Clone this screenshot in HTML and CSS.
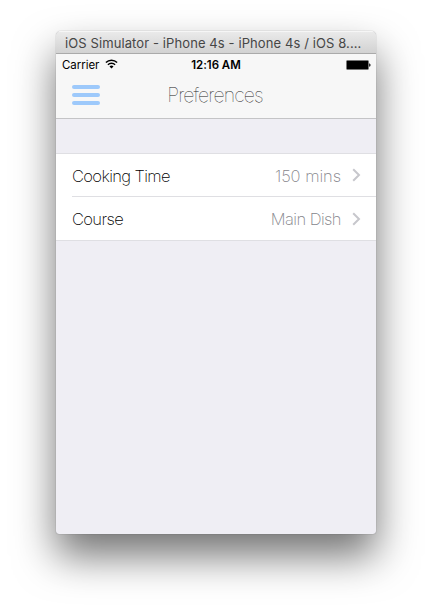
FILE: index.html
```html
<!DOCTYPE html>
<html lang="en">
<head>
<meta charset="utf-8">
<title>Preferences</title>
<link rel="stylesheet" href="styles.css">
</head>
<body>
<div class="window">
  <div class="titlebar"><span class="titlebar-text">iOS Simulator - iPhone 4s - iPhone 4s / iOS 8.…</span></div>
  <div class="screen">
    <header class="header">
      <div class="status">
        <div class="status-left">
          <span class="carrier">Carrier</span>
          <svg class="wifi" width="13" height="10" viewBox="0 0 13 10" fill="none" stroke="#000" stroke-width="1.5">
            <path d="M.9 3.5a8 8 0 0 1 11.2 0M2.9 5.7a5.1 5.1 0 0 1 7.2 0"/>
            <path d="M4.5 7.4a2.9 2.9 0 0 1 4 0L6.5 9.5z" fill="#000" stroke="none"/>
          </svg>
        </div>
        <span class="clock">12:16 AM</span>
        <svg class="battery" width="25" height="10" viewBox="0 0 25 10">
          <rect x=".5" y=".5" width="22" height="9" rx="1" fill="#000" stroke="#777"/>
          <path d="M23.2 3.2c1.8.5 1.8 3.1 0 3.6z" fill="#000"/>
        </svg>
      </div>
      <nav class="navbar">
        <div class="menu"><i class="bar"></i><i class="bar"></i><i class="bar"></i></div>
        <h1 class="title">Preferences</h1>
      </nav>
    </header>
    <main class="list">
      <div class="row">
        <span class="label">Cooking Time</span>
        <span class="value mins">150 mins</span>
        <svg class="chevron" width="9" height="14" viewBox="0 0 9 14" fill="none" stroke="#c7c7cc" stroke-width="2"><path d="M1.200 1.200 7 7l-5.800 5.800"/></svg>
      </div>
      <div class="row">
        <span class="label">Course</span>
        <span class="value">Main Dish</span>
        <svg class="chevron" width="9" height="14" viewBox="0 0 9 14" fill="none" stroke="#c7c7cc" stroke-width="2"><path d="M1.200 1.200 7 7l-5.800 5.800"/></svg>
      </div>
    </main>
  </div>
</div>
</body>
</html>
```
FILE: styles.css
```css
* { box-sizing: border-box; }
body {
  margin: 0;
  padding: 31px 0 0 56px;
  height: 614px;
  overflow: hidden;
  background: #fff;
  font-family: Inter, "Liberation Sans", sans-serif;
}
.window {
  width: 320px;
  height: 503px;
  border-radius: 5px 5px 3px 3px;
  overflow: hidden;
  background: #efeef4;
  box-shadow: 0 0 1px rgba(0, 0, 0, .5), 0 22px 40px rgba(0, 0, 0, .55);
}
.titlebar {
  height: 23px;
  padding-left: 9px;
  background: linear-gradient(#ebebeb, #d2d2d2);
  border-bottom: 1px solid #aaa;
  box-shadow: inset 0 1px #f6f6f6;
  color: #464646;
  font-size: 13px;
  line-height: 25px;
  white-space: nowrap;
}
.titlebar-text { letter-spacing: .1px; }
.header {
  height: 65px;
  background: #f7f7f7;
  border-bottom: 1px solid #c4c4c6;
}
.status {
  display: grid;
  grid-template-columns: 1fr auto 1fr;
  align-items: center;
  height: 20px;
  padding: 0 6px;
  font-size: 11.5px;
  line-height: 22px;
  color: #000;
}
.status-left { display: flex; align-items: center; gap: 6px; }
.wifi { margin-bottom: 2px; }
.carrier { letter-spacing: -.05px; }
.clock { font-weight: 600; letter-spacing: -.03px; }
.battery { justify-self: end; margin: 0 -1px 1px 0; }
.navbar {
  display: grid;
  grid-template-columns: 28px 1fr 28px;
  align-items: center;
  height: 44px;
  padding: 0 16px;
}
.menu { display: grid; gap: 4px; padding-bottom: 2px; }
.bar { height: 4px; border-radius: 2px; background: #9dc9fb; }
.title {
  margin: 0;
  padding: 0 2px 2px 0;
  text-align: center;
  font-size: 19.5px;
  font-weight: 100;
  line-height: 40px;
  letter-spacing: -.9px;
  color: #222;
}
.list {
  margin-top: 34px;
  border-top: 1px solid #dfdfe3;
  border-bottom: 1px solid #dfdfe3;
  background: #fff;
}
.row {
  display: flex;
  align-items: center;
  height: 42px;
  margin-left: 16px;
  padding-right: 15px;
  font-size: 16.5px;
  font-weight: 200;
  color: #000;
}
.row + .row {
  height: 44px;
  border-top: 1px solid #dfdfe3;
}
.label { flex: 1; padding-top: 1px; letter-spacing: -.63px; }
.value { padding-top: 1px; color: #85858b; letter-spacing: -.55px; }
.mins { letter-spacing: -.05px; }
.chevron { margin-left: 11px; }
```
